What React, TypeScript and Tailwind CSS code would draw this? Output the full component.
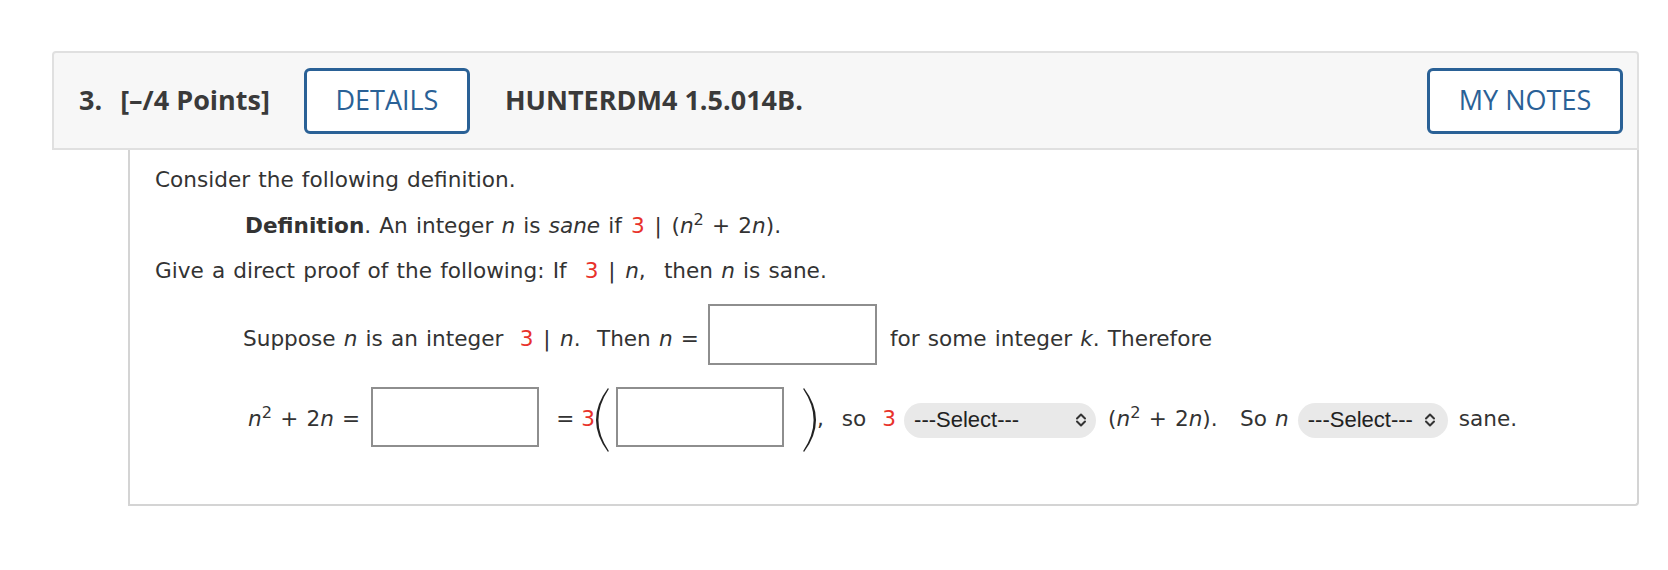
import React from "react";

const Red = ({ children }: { children: React.ReactNode }) => (
  <span className="text-[#e8322b]">{children}</span>
);

const I = ({ children }: { children: React.ReactNode }) => <i className="italic">{children}</i>;

const Bar = () => <span className="px-[1.5px]">|</span>;

const Box = () => (
  <span className="block w-[169px] h-[61px] border-2 border-[#8e8e8e] bg-white shrink-0" />
);

const Box2 = () => (
  <span className="block w-[168px] h-[60px] border-2 border-[#8e8e8e] bg-white shrink-0" />
);

const Chevrons = () => (
  <svg width="14" height="16" viewBox="0 0 14 16" className="shrink-0">
    <path d="M3 6.5 L7 2.5 L11 6.5" fill="none" stroke="#333" strokeWidth="2" strokeLinecap="round" strokeLinejoin="round" />
    <path d="M3 9.5 L7 13.5 L11 9.5" fill="none" stroke="#333" strokeWidth="2" strokeLinecap="round" strokeLinejoin="round" />
  </svg>
);

const Select = ({ w, gapClass }: { w: string; gapClass: string }) => (
  <span
    className={`flex items-center ${w} h-[35px] rounded-full bg-[#e9e9e9] pl-[10px] pr-[8px] shrink-0 mt-[7px] [word-spacing:0px]`}
    style={{ fontFamily: '"Liberation Sans", Arial, sans-serif' }}
  >
    <span className="text-[22px] leading-none text-[#222]">---Select---</span>
    <span className={gapClass} />
    <Chevrons />
  </span>
);

const LParen = () => (
  <svg width="14" height="66" viewBox="0 0 14 66" className="shrink-0 mt-[7px]">
    <path d="M13 1 Q-11 33 13 65 L13.8 64 Q-7 33 13.8 2 Z" fill="#222" />
  </svg>
);

const RParen = () => (
  <svg width="14" height="66" viewBox="0 0 14 66" className="shrink-0 mt-[7px]">
    <path d="M1 1 Q25 33 1 65 L0.2 64 Q21 33 0.2 2 Z" fill="#222" />
  </svg>
);

export default function App() {
  return (
    <div className="w-[1668px] h-[570px] bg-white overflow-hidden">
      <div className="pt-[51px] pl-[52px]">
        {/* Header */}
        <div
          className="w-[1587px] h-[99px] flex items-center bg-[#f7f7f7] border-2 border-[#e0e0e0] rounded-t-[4px] pl-[25px] pr-[14px] text-[#3a3a3a]"
          style={{ fontFamily: '"Open Sans", sans-serif' }}
        >
          <span className="text-[27px] font-bold">3.</span>
          <span className="text-[27px] font-bold ml-[18px]">[–/4 Points]</span>
          <span className="ml-[34px] w-[166px] h-[66px] flex items-center justify-center border-[3px] border-[#2a6196] rounded-[6px] bg-white text-[#2a6196] text-[27px] font-medium">
            DETAILS
          </span>
          <span className="text-[27px] font-bold ml-[35px]">HUNTERDM4 1.5.014B.</span>
          <span className="ml-auto w-[196px] h-[66px] flex items-center justify-center border-[3px] border-[#2a6196] rounded-[6px] bg-white text-[#2a6196] text-[27px] font-medium">
            MY NOTES
          </span>
        </div>

        {/* Body */}
        <div
          className="ml-[76px] w-[1511px] h-[356px] border-l-2 border-r-2 border-b-2 border-[#d4d4d4] rounded-br-[4px] bg-white text-[#333] text-[21.6px] leading-[30px] pl-[25px] pt-[15px] [word-spacing:1.3px]"
          style={{ fontFamily: '"DejaVu Sans", Verdana, sans-serif' }}
        >
          <p>Consider the following definition.</p>
          <p className="mt-[16px] ml-[90px]">
            <b className="font-bold">Definition</b>. An integer <I>n</I> is <I>sane</I> if{" "}
            <span className="ml-[1px]"><Red>3</Red> <Bar /> (<I>n</I><sup>2</sup> + 2<I>n</I>).</span>
          </p>
          <p className="mt-[15px]">
            Give a direct proof of the following: If <span className="ml-[10px]"><Red>3</Red> <Bar /> <I>n</I>,</span>
            <span className="ml-[10px]"> then <I>n</I> is sane.</span>
          </p>

          {/* Row 1 */}
          <div className="mt-[18px] ml-[88px] flex items-center">
            <span className="mt-[8px] whitespace-pre">
              Suppose <I>n</I> is an integer  <Red>3</Red> <Bar /> <I>n</I>.  Then <I>n</I> =
            </span>
            <span className="ml-[9px]"><Box /></span>
            <span className="ml-[13px] mt-[8px]">
              for some integer <I>k</I>. Therefore
            </span>
          </div>

          {/* Row 2 */}
          <div className="mt-[15px] ml-[93px] flex items-center">
            <span className="mt-[5px] whitespace-pre">
              <I>n</I><sup>2</sup> + 2<I>n</I> =
            </span>
            <span className="ml-[11px]"><Box2 /></span>
            <span className="ml-[17px] mt-[5px]">=</span>
            <span className="ml-[7px] mt-[5px]"><Red>3</Red></span>
            <LParen />
            <span className="ml-[7px]"><Box2 /></span>
            <span className="ml-[19px]"><RParen /></span>
            <span className="mt-[5px]">,</span>
            <span className="ml-[18px] mt-[5px]">so</span>
            <span className="ml-[16px] mt-[5px]"><Red>3</Red></span>
            <span className="ml-[8px]"><Select w="w-[192px]" gapClass="flex-1" /></span>
            <span className="ml-[12px] mt-[5px] whitespace-pre">
              (<I>n</I><sup>2</sup> + 2<I>n</I>).  <span className="ml-[6px]">So <I>n</I></span>
            </span>
            <span className="ml-[9px]"><Select w="w-[150px]" gapClass="w-[10px]" /></span>
            <span className="ml-[11px] mt-[5px]">sane.</span>
          </div>
        </div>
      </div>
    </div>
  );
}
